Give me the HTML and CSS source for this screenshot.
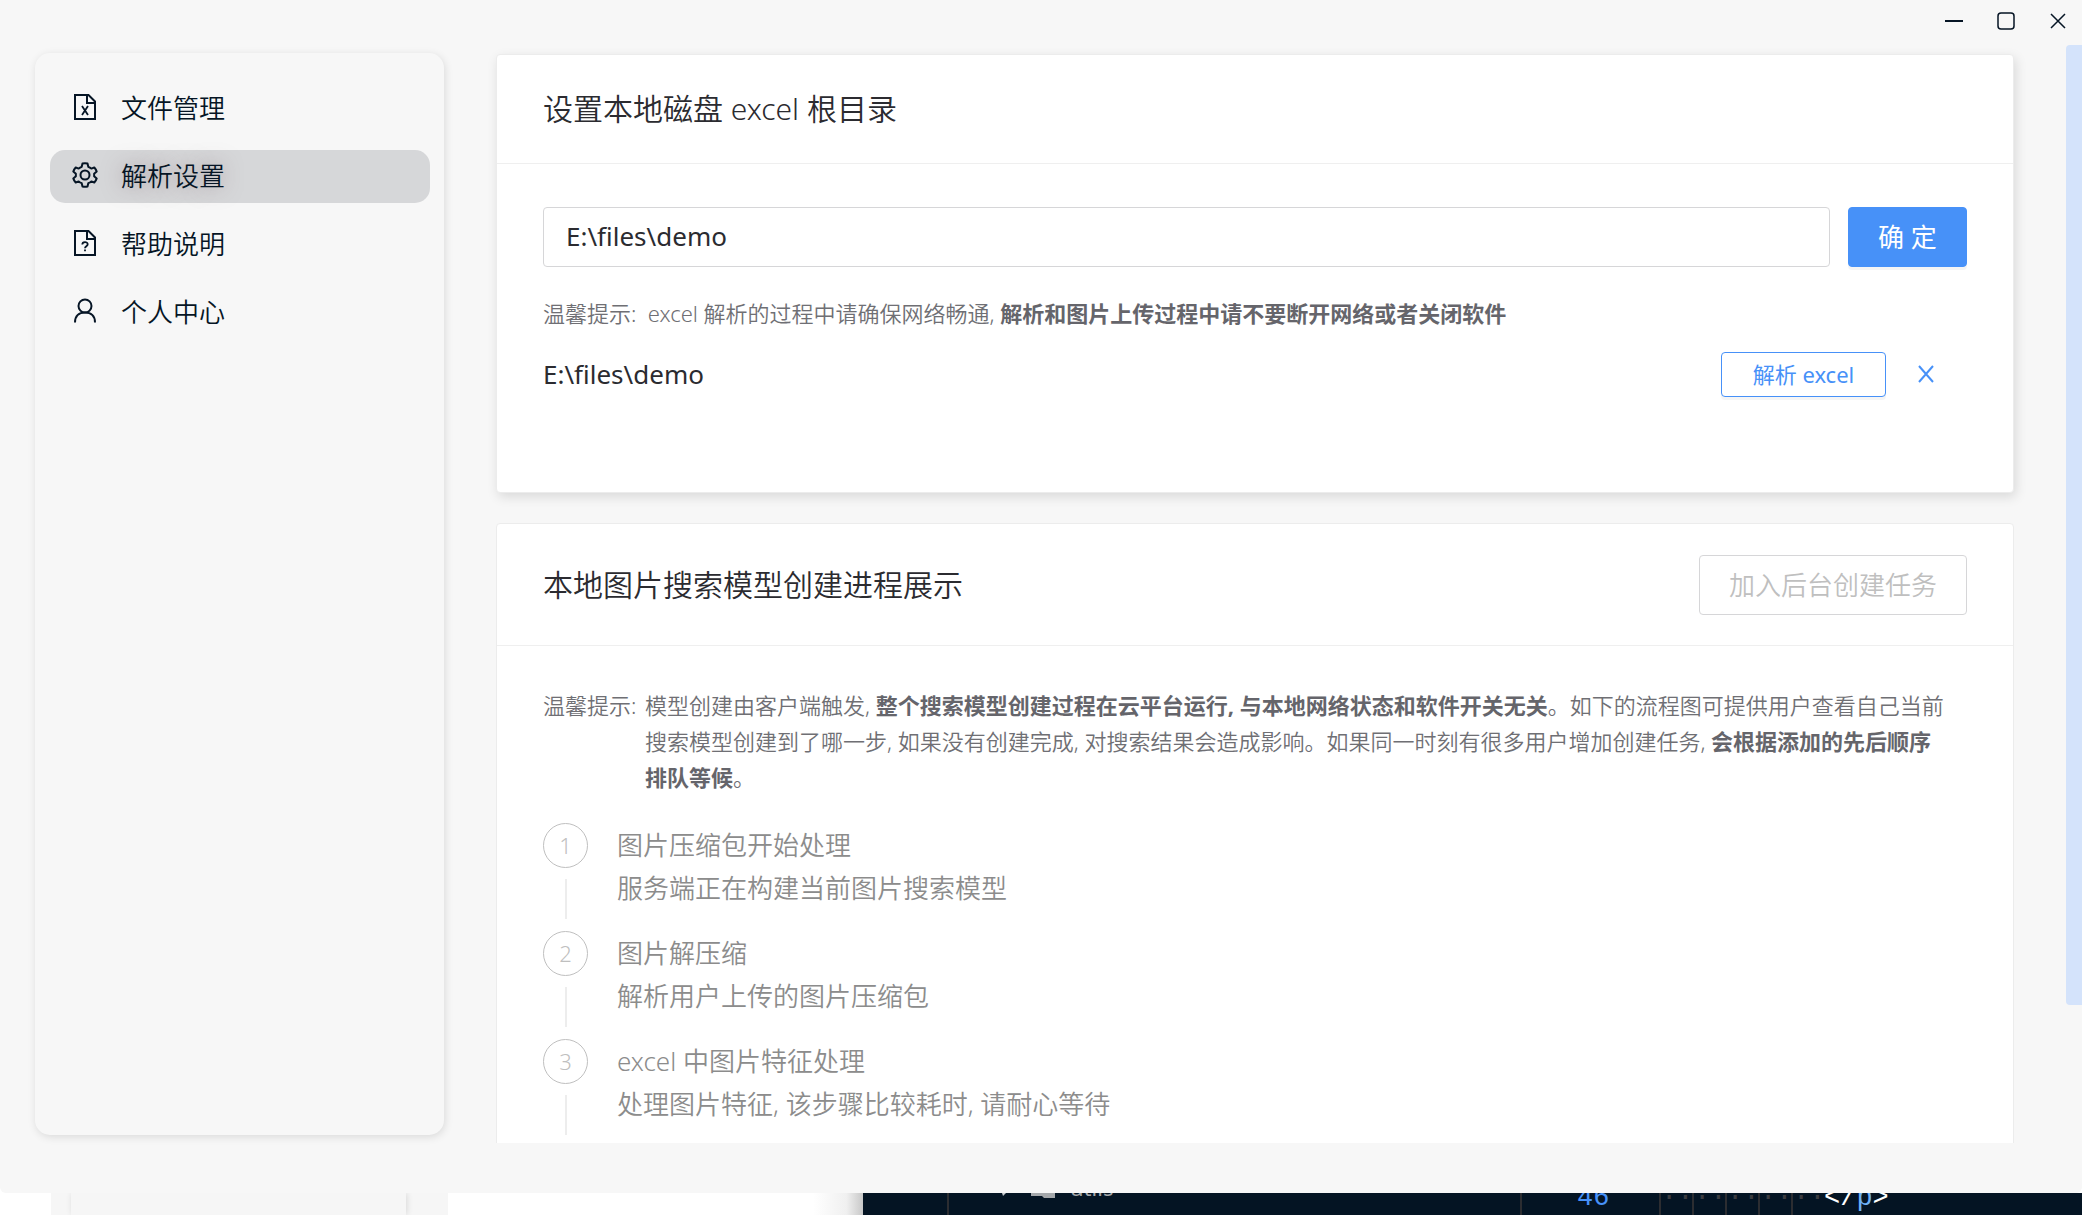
FILE: index.html
```
<!DOCTYPE html>
<html lang="zh-CN">
<head>
    <meta charset="UTF-8">
    <meta name="viewport" content="width=device-width, initial-scale=1.0">
    <title>解析设置</title>
    <link rel="stylesheet" href="styles.css">
</head>
<body>

    <div class="app-window">
        <header class="titlebar">
            <button type="button" class="titlebar-btn" aria-label="最小化">
                <svg viewBox="0 0 20 20"><path d="M1 10H19" stroke-width="2"/></svg>
            </button>
            <button type="button" class="titlebar-btn" aria-label="最大化">
                <svg viewBox="0 0 20 20"><rect x="2" y="2" width="16" height="16" rx="3"/></svg>
            </button>
            <button type="button" class="titlebar-btn" aria-label="关闭">
                <svg viewBox="0 0 20 20"><path d="M3 3L17 17M17 3L3 17"/></svg>
            </button>
        </header>

        <div class="layout">
            <nav class="sidebar">
                <a href="#" class="menu-item">
                    <svg class="menu-icon" viewBox="0 0 28 28"><path d="M4 2H17.500L24 8.500V26H4ZM16 2V10H24"/><path d="M11 13L17 22M17 13L11 22" stroke-width="1.800"/></svg>
                    <span>文件管理</span>
                </a>
                <a href="#" class="menu-item active">
                    <svg class="menu-icon" viewBox="0 0 28 28"><path d="M11.500 2.500Q14 1.800 16.500 2.500L17.300 5.800Q19 6.500 20.300 7.600L23.300 6.500Q25 8.300 25.700 10.600L23.100 12.800Q23.300 14 23.100 15.200L25.700 17.400Q25 19.700 23.300 21.500L20.300 20.400Q19 21.500 17.300 22.200L16.500 25.500Q14 26.200 11.500 25.500L10.700 22.200Q9 21.500 7.700 20.400L4.700 21.500Q3 19.700 2.300 17.400L4.900 15.200Q4.700 14 4.900 12.800L2.300 10.600Q3 8.300 4.700 6.500L7.700 7.600Q9 6.500 10.700 5.800Z" stroke-linejoin="round"/><circle cx="14" cy="14" r="4.500"/></svg>
                    <span>解析设置</span>
                </a>
                <a href="#" class="menu-item">
                    <svg class="menu-icon" viewBox="0 0 28 28"><path d="M4 2H17.500L24 8.500V26H4ZM16 2V10H24"/><path d="M11.300 15.500C11.300 12.300 16.700 12.300 16.700 15.300C16.700 17.300 14 17.300 14 19.200M14 20.500V22.300" stroke-width="1.800"/></svg>
                    <span>帮助说明</span>
                </a>
                <a href="#" class="menu-item">
                    <svg class="menu-icon" viewBox="0 0 28 28"><circle cx="14" cy="9" r="6.500"/><path d="M4 25.500C4 19 8 15.500 14 15.500S24 19 24 25.500"/></svg>
                    <span>个人中心</span>
                </a>
            </nav>

            <main class="content">
                <section class="card card-raised">
                    <div class="card-head">
                        <h2>设置本地磁盘 excel 根目录</h2>
                    </div>
                    <div class="card-body">
                        <form class="path-form">
                            <input type="text" class="path-input" value="E:\files\demo" aria-label="excel 根目录">
                            <button type="button" class="btn btn-primary">确 定</button>
                        </form>
                        <p class="tip">温馨提示:&nbsp; excel 解析的过程中请确保网络畅通, <strong>解析和图片上传过程中请不要断开网络或者关闭软件</strong></p>
                        <div class="path-row">
                            <span class="path-name">E:\files\demo</span>
                            <button type="button" class="btn btn-outline">解析 excel</button>
                            <button type="button" class="btn-remove" aria-label="删除">
                                <svg viewBox="0 0 20 20"><path d="M3 2L17 18M17 2L3 18"/></svg>
                            </button>
                        </div>
                    </div>
                </section>

                <section class="card">
                    <div class="card-head card-head-tall">
                        <h2>本地图片搜索模型创建进程展示</h2>
                        <button type="button" class="btn btn-disabled" disabled>加入后台创建任务</button>
                    </div>
                    <div class="card-body">
                        <div class="tip tip-block">
                            <span class="tip-label">温馨提示:</span>
                            <p>模型创建由客户端触发, <strong>整个搜索模型创建过程在云平台运行, 与本地网络状态和软件开关无关</strong>。如下的流程图可提供用户查看自己当前<br>搜索模型创建到了哪一步, 如果没有创建完成, 对搜索结果会造成影响。如果同一时刻有很多用户增加创建任务, <strong>会根据添加的先后顺序<br>排队等候</strong>。</p>
                        </div>
                        <ol class="steps">
                            <li class="step">
                                <span class="step-icon">1</span>
                                <div class="step-text">
                                    <h3>图片压缩包开始处理</h3>
                                    <p>服务端正在构建当前图片搜索模型</p>
                                </div>
                            </li>
                            <li class="step">
                                <span class="step-icon">2</span>
                                <div class="step-text">
                                    <h3>图片解压缩</h3>
                                    <p>解析用户上传的图片压缩包</p>
                                </div>
                            </li>
                            <li class="step">
                                <span class="step-icon">3</span>
                                <div class="step-text">
                                    <h3>excel 中图片特征处理</h3>
                                    <p>处理图片特征, 该步骤比较耗时, 请耐心等待</p>
                                </div>
                            </li>
                        </ol>
                    </div>
                </section>
            </main>
        </div>
        <div class="scroll-thumb"></div>
    </div>

    <!-- windows behind the app -->
    <div class="backdrop">
        <div class="backdrop-page"><div class="backdrop-panel"></div></div>
        <div class="backdrop-blank"></div>
        <div class="editor">
            <div class="editor-gutter"></div>
            <div class="editor-tree">
                <svg class="tree-icons" viewBox="0 0 60 6"><path d="M2 0H6L3 3Z" fill="#c8ccd0"/><path d="M31 0H55V5H44L42 3H31Z" fill="#a5a8ab"/></svg>
                <span>utils</span>
            </div>
            <div class="editor-code">
                <span class="line-no">46</span>
                <span class="indent">··</span><span class="indent">··</span><span class="indent">··</span><span class="indent">··</span><span class="indent">··</span>
                <code>&lt;/<span class="tag">p</span>&gt;</code>
            </div>
        </div>
    </div>

</body>
</html>
```
FILE: styles.css
```
:root {
    --bg-color: #f7f7f7;
    --text-color: #2b2b30;
    --menu-color: #061525;
    --primary-color: #4791f8;
    --border-color: #d6d6d8;
    --line-color: #efefef;
}
* { box-sizing: border-box; }
body {
    font-family: "Noto Sans", "Noto Sans CJK SC", sans-serif;
    font-size: 26px;
    font-weight: 350;
    color: var(--text-color);
    background: #fff;
    margin: 0;
    height: 100vh;
    display: flex;
    flex-direction: column;
    overflow: hidden;
}
h2, h3, p, ol { margin: 0; padding: 0; font-weight: inherit; }
button, input { font: inherit; }
svg { fill: none; stroke: currentColor; stroke-width: 2; display: block; }

/* App window */
.app-window {
    position: relative;
    flex: 1;
    min-height: 0;
    display: flex;
    flex-direction: column;
    padding-bottom: 50px;
    background: var(--bg-color);
    border-radius: 0 0 6px 6px;
}
.titlebar {
    display: flex; justify-content: flex-end; align-items: center;
    gap: 32px; height: 42px; padding-right: 14px; flex: none;
}
.titlebar-btn {
    width: 20px; height: 20px; padding: 0; border: 0;
    background: none; color: var(--menu-color);
}
.titlebar-btn svg { stroke-width: 1.5; }
.scroll-thumb {
    position: absolute; top: 45px; right: 0; width: 16px; height: 960px;
    background: #d4e3fb; border-radius: 4px 0 0 4px;
}
.layout { flex: 1; min-height: 0; display: flex; }

/* Sidebar */
.sidebar {
    flex: none;
    width: 409px;
    margin: 11px 0 8px 35px;
    padding: 29px 14px 29px 15px;
    display: flex;
    flex-direction: column;
    gap: 15px;
    border-radius: 15px;
    box-shadow: 1px 2px 8px rgba(0, 0, 0, 0.12);
}
.menu-item {
    display: flex; align-items: center; gap: 22px;
    height: 53px; padding: 0 21px 4px; border-radius: 15px;
    color: var(--menu-color); text-decoration: none;
}
.menu-item.active {
    background: #d6d7d9;
    text-shadow: 0 0 20px rgba(120, 90, 100, 0.5);
}
.menu-icon { width: 28px; height: 28px; }

/* Cards */
.content {
    flex: 1;
    min-width: 0;
    overflow: hidden;
    padding: 12px 68px 0 52px;
}
.card {
    background: #fff;
    border: 1px solid #ececec;
    border-radius: 4px;
    margin-bottom: 30px;
}
.card-raised {
    min-height: 439px;
    box-shadow: 2px 4px 12px rgba(0, 0, 0, 0.12);
}
.card-head {
    display: flex; justify-content: space-between; align-items: center;
    height: 109px; padding: 0 46px; border-bottom: 1px solid var(--line-color);
}
.card-head-tall { height: 122px; }
.card-head h2 { font-size: 30px; line-height: 44px; }
.card-body { padding: 43px 46px; }

/* Buttons and inputs */
.btn {
    height: 60px; padding: 0 29px; border: 1px solid var(--border-color);
    border-radius: 4px; background: #fff; line-height: 40px; white-space: nowrap;
}
.btn-primary {
    width: 119px; color: #fff; background: var(--primary-color); font-weight: 400;
    border-color: var(--primary-color); box-shadow: 0 3px 0 rgba(0, 0, 0, 0.04);
}
.btn-outline {
    width: 165px; height: 45px; font-size: 22px; color: var(--primary-color);
    font-weight: 400;
    border-color: var(--primary-color); box-shadow: 0 3px 0 rgba(0, 0, 0, 0.04);
}
.btn-disabled { color: #bfbfbf; }
.btn-remove {
    width: 20px; height: 20px; padding: 0; border: 0;
    background: none; color: var(--primary-color);
}
.path-form { display: flex; gap: 18px; }
.path-input {
    flex: 1; min-width: 0; height: 60px; padding: 0 22px 2px; color: inherit;
    font-weight: 400;
    border: 1px solid var(--border-color); border-radius: 4px; background: #fff;
}
.path-row { display: flex; align-items: center; padding-right: 31px; gap: 30px; height: 46px; margin-top: 20px; }
.path-name { flex: 1; font-weight: 400; }

.tip { font-size: 22px; line-height: 36px; color: #6f6f74; margin-top: 28px; }
.tip strong { font-weight: 700; color: #65656b; }
.tip-block { display: flex; margin-top: -2px; }
.tip-label { flex: none; width: 102px; }
.tip-block p { white-space: nowrap; }

/* Steps */
.steps { list-style: none; margin-top: 28px; color: #8c8c8c; }
.step { position: relative; display: flex; gap: 29px; height: 108px; }
.step::after {
    content: ''; position: absolute; left: 22px; top: 56px;
    width: 2px; height: 40px; background: #ededed;
}
.step-icon {
    width: 45px; height: 45px; flex: none; border: 1px solid #bfbfbf; border-radius: 50%;
    color: #bfbfbf; font-size: 22px; line-height: 43px; text-align: center;
}
.step-text { padding-top: 1px; }
.step-text h3, .step-text p { font-size: 26px; line-height: 43px; }

/* Windows behind the app */
.backdrop { flex: none; display: flex; height: 22px; overflow: hidden; font-weight: 400; }
.backdrop-page {
    width: 397px; margin-left: 51px; padding: 0 42px 0 20px; background: #f6f6f6;
}
.backdrop-panel { height: 100%; box-shadow: 1px 0 6px rgba(0, 0, 0, 0.12); }
.backdrop-blank {
    width: 415px;
    background: linear-gradient(to right, #fff 88%, #f0f0f0 96%, #c8c8c8);
}
.editor {
    flex: 1; display: flex; background: #041423; color: #a5a8ab;
    font-family: "Liberation Mono", monospace; font-size: 27px;
}
.editor-gutter { width: 86px; border-right: 2px solid #2c2d31; }
.editor-tree {
    width: 573px; display: flex; align-items: flex-start; padding-left: 51px; gap: 10px;
    border-right: 2px solid #2c2d31; font-family: "Noto Sans", sans-serif; font-size: 22px;
}
.tree-icons { width: 60px; height: 6px; stroke: none; }
.editor-tree span { line-height: 22px; margin-top: -17px; }
.editor-code { display: flex; align-items: flex-end; line-height: 33px; }
.line-no { width: 137px; padding-left: 55px; color: var(--primary-color); }
.indent { width: 33px; border-left: 2px solid #2c2d31; color: #3a3b3f; }
.editor-code code { font: inherit; color: #fff; }
.tag { color: #6fb1f5; }
```
